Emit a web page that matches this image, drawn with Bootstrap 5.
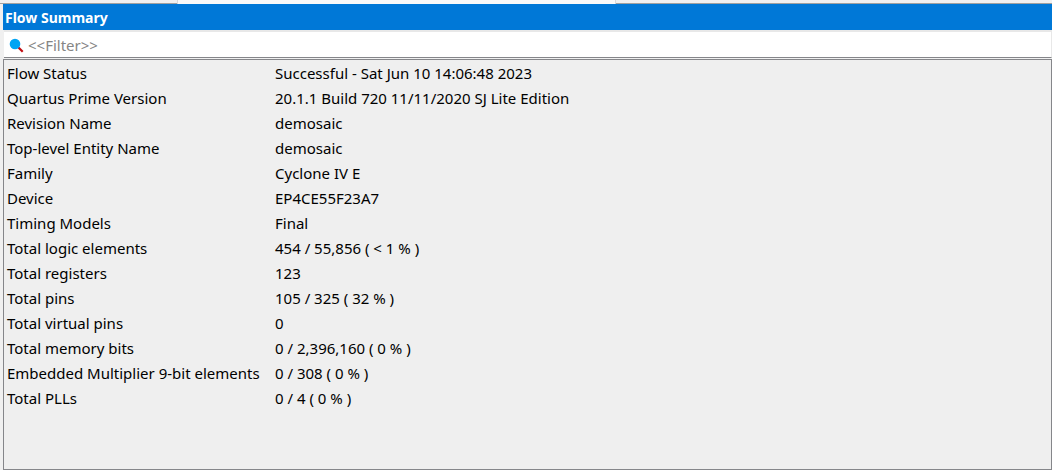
<!DOCTYPE html>
<html lang="en">
<head>
<meta charset="utf-8">
<meta name="viewport" content="width=device-width, initial-scale=1">
<title>Flow Summary</title>
<link href="https://cdn.jsdelivr.net/npm/bootstrap@5.3.0/dist/css/bootstrap.min.css" rel="stylesheet">
<style>
  body { background: #f0f0f0; color: #000; font: 15px/25px "Noto Sans", "Open Sans", sans-serif; }
  .tab-edge { height: 4px; }
  .tab-edge > div { border-bottom: 1px solid #a0a0a0; }
  .tab-edge .tab-before { width: 16.800%; }
  .tab-edge .tab-current { width: 41.800%; background: #f9f9f9; border-bottom: 0; border-right: 1px solid #d9d9d9; border-left: 1px solid #d9d9d9; }
  .report { padding-left: 3px; }
  .report-title { background: #0078d7; color: #fff; font-size: 14px; line-height: 26px; padding: 1px 0 0 2px; height: 26px; }
  .filter-bar { height: 28px; margin-left: 1px; background: #fff; border: solid #e8e8e8; border-width: 2px 1px 0 0; border-bottom: 1px solid #85868a; padding: 2px 0 0 5px; }
  .filter-bar .form-control { font-size: 15px; line-height: 23px; color: #000; }
  .filter-bar .form-control::placeholder { color: #858585; }
  .report-frame { border: 1px solid #85868a; background: #efefef; margin-top: 1px; padding: 1px 0 0 3px; }
  .report-table th { width: 268px; }
</style>
</head>
<body>
<div class="d-flex flex-column min-vh-100">
  <div class="tab-edge d-flex">
    <div class="tab-before"></div>
    <div class="tab-current"></div>
    <div class="flex-grow-1"></div>
  </div>
  <main class="report d-flex flex-column flex-grow-1">
    <h1 class="report-title fw-bold m-0">Flow Summary</h1>
    <div class="filter-bar d-flex align-items-center">
      <label for="filter" class="d-flex" aria-label="Filter">
        <svg width="15" height="15" viewBox="0 0 15 15" aria-hidden="true">
          <path d="M8.500 8.500l5.200 5.200" stroke="#c00d12" stroke-width="2.200"/>
          <circle cx="6" cy="6" r="5.300" fill="#00a4f4"/>
        </svg>
      </label>
      <input id="filter" type="text" class="form-control border-0 rounded-0 shadow-none bg-transparent p-0 ps-1" placeholder="&lt;&lt;Filter&gt;&gt;">
    </div>
    <div class="report-frame flex-grow-1">
      <table class="report-table w-100">
        <tbody>
          <tr><th scope="row" class="fw-normal p-0">Flow Status</th><td class="p-0">Successful - Sat Jun 10 14:06:48 2023</td></tr>
          <tr><th scope="row" class="fw-normal p-0">Quartus Prime Version</th><td class="p-0">20.1.1 Build 720 11/11/2020 SJ Lite Edition</td></tr>
          <tr><th scope="row" class="fw-normal p-0">Revision Name</th><td class="p-0">demosaic</td></tr>
          <tr><th scope="row" class="fw-normal p-0">Top-level Entity Name</th><td class="p-0">demosaic</td></tr>
          <tr><th scope="row" class="fw-normal p-0">Family</th><td class="p-0">Cyclone IV E</td></tr>
          <tr><th scope="row" class="fw-normal p-0">Device</th><td class="p-0">EP4CE55F23A7</td></tr>
          <tr><th scope="row" class="fw-normal p-0">Timing Models</th><td class="p-0">Final</td></tr>
          <tr><th scope="row" class="fw-normal p-0">Total logic elements</th><td class="p-0">454 / 55,856 ( &lt; 1 % )</td></tr>
          <tr><th scope="row" class="fw-normal p-0">Total registers</th><td class="p-0">123</td></tr>
          <tr><th scope="row" class="fw-normal p-0">Total pins</th><td class="p-0">105 / 325 ( 32 % )</td></tr>
          <tr><th scope="row" class="fw-normal p-0">Total virtual pins</th><td class="p-0">0</td></tr>
          <tr><th scope="row" class="fw-normal p-0">Total memory bits</th><td class="p-0">0 / 2,396,160 ( 0 % )</td></tr>
          <tr><th scope="row" class="fw-normal p-0">Embedded Multiplier 9-bit elements</th><td class="p-0">0 / 308 ( 0 % )</td></tr>
          <tr><th scope="row" class="fw-normal p-0">Total PLLs</th><td class="p-0">0 / 4 ( 0 % )</td></tr>
        </tbody>
      </table>
    </div>
  </main>
</div>
<script src="https://cdn.jsdelivr.net/npm/bootstrap@5.3.0/dist/js/bootstrap.bundle.min.js"></script>
</body>
</html>
